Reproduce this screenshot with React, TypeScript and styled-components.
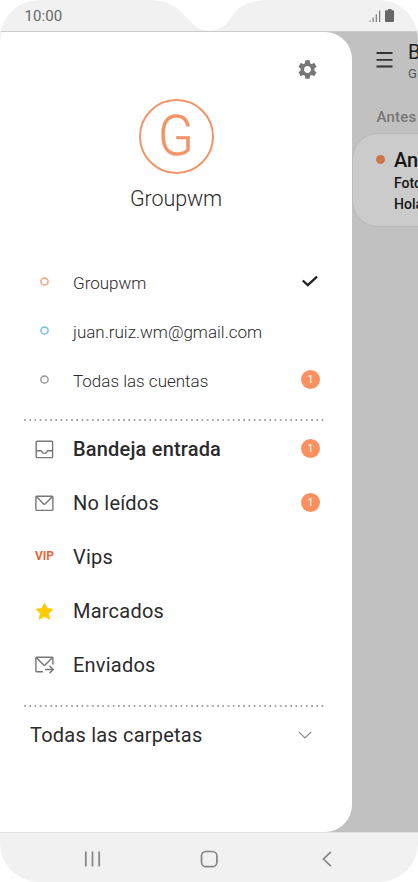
import React from 'react';
import styled, { createGlobalStyle } from 'styled-components';

const GlobalStyle = createGlobalStyle`
  * {
    box-sizing: border-box;
  }

  body {
    margin: 0;
    background: #fff;
    font-family: Roboto, 'Liberation Sans', sans-serif;
    color: #2b2b2b;
  }

  svg {
    display: block;
    flex: none;
  }
`;

const Phone = styled.div`
  display: flex;
  flex-direction: column;
  width: 418px;
  height: 882px;
  border-radius: 39px;
  overflow: hidden;
  background: #fff;
`;

const StatusBar = styled.header`
  position: relative;
  display: flex;
  align-items: center;
  justify-content: space-between;
  height: 32px;
  padding: 0 24px 0 24.5px;
  background: #f1f1f1;
  border-bottom: 1px solid #cbcbcb;
`;

const Notch = styled.svg`
  position: absolute;
  left: 150px;
  top: 0;
`;

const Clock = styled.span`
  font-size: 15px;
  line-height: 20px;
  letter-spacing: 0.1px;
  color: #686868;
  margin-top: 1px;
`;

const StatusIcons = styled.div`
  display: flex;
  align-items: flex-end;
  gap: 4px;
`;

const Screen = styled.div`
  display: flex;
  height: 800px;
  background: #c1c1c1;
`;

const Drawer = styled.nav`
  display: flex;
  flex-direction: column;
  flex: none;
  width: 352px;
  background: #fff;
  border-radius: 0 27px 27px 0;
  padding: 0 28px 0 24px;
`;

const DrawerTop = styled.div`
  display: flex;
  justify-content: flex-end;
  height: 67px;
  padding: 25.5px 5.5px 0 0;
`;

const Profile = styled.div`
  display: flex;
  flex-direction: column;
  align-items: center;
  height: 127px;
  padding-left: 4px;
`;

const Avatar = styled.div`
  display: flex;
  align-items: center;
  justify-content: center;
  width: 75px;
  height: 75px;
  border: 2px solid #f39468;
  border-radius: 50%;
  color: #f39468;
  font-size: 55px;
  font-weight: 300;
  line-height: 75px;
`;

const Letter = styled.span`
  display: block;
  transform: scaleX(0.95);
  -webkit-text-stroke: 0.4px #f39468;
`;

const ProfileName = styled.div`
  margin-top: 10.5px;
  font-size: 21.5px;
  font-weight: 300;
  line-height: 28px;
  letter-spacing: -0.1px;
`;

const Row = styled.div<{ $height: number }>`
  display: flex;
  align-items: center;
  height: ${(props) => props.$height}px;
  padding-right: 4px;
`;

const IconSlot = styled.div`
  display: flex;
  justify-content: center;
  flex: none;
  width: 41px;
  margin-right: 8px;
`;

const DotSvg = styled.svg`
  margin-top: -2px;
`;

const AccountName = styled.span`
  flex: 1;
  font-size: 17px;
  font-weight: 300;
  line-height: 24px;
  white-space: nowrap;
`;

const FolderName = styled.span<{ $strong?: boolean }>`
  flex: 1;
  font-size: 20px;
  font-weight: ${(props) => (props.$strong ? 500 : 400)};
  line-height: 28px;
  letter-spacing: ${(props) => (props.$strong ? 0.18 : 0.22)}px;
`;

const Badge = styled.span`
  width: 19px;
  height: 19px;
  margin-top: -2px;
  border-radius: 50%;
  background: #fc905f;
  color: #fff;
  font-size: 10.5px;
  line-height: 19px;
  text-align: center;
`;

const Divider = styled.div`
  height: 2px;
  width: 301px;
  background: radial-gradient(circle at 1px 1px, #999 0.6px, transparent 1.2px) 0 0 / 5.23px 2px repeat-x;
`;

const Accounts = styled.div`
  height: 161px;
`;

const Folders = styled.div`
  height: 284px;
  padding-top: 1px;
`;

const VipLabel = styled.span`
  color: #e0683b;
  font-size: 12px;
  font-weight: 700;
  line-height: 14px;
  margin-top: -2px;
`;

const MoreFolders = styled(Row)`
  padding: 0 12px 0 6px;
`;

const MailList = styled.main`
  flex: 1;
  min-width: 0;
  overflow: hidden;
  white-space: nowrap;
`;

const MailHeader = styled.div`
  display: flex;
  height: 69px;
  padding: 8px 0 0 24px;
  gap: 15px;
`;

const MailTitle = styled.div`
  font-size: 20px;
  line-height: 24px;
  color: #1e1e1e;
`;

const MailSubtitle = styled.div`
  font-size: 13px;
  line-height: 19px;
  color: #555;
`;

const SectionLabel = styled.div`
  height: 32px;
  padding-left: 24.5px;
  font-size: 15px;
  font-weight: 500;
  line-height: 33px;
  letter-spacing: 0.2px;
  color: #777;
`;

const MailCard = styled.article`
  display: flex;
  width: 360px;
  height: 94px;
  padding: 13px 0 0 23px;
  gap: 9px;
  border: 1px solid #bababa;
  border-radius: 26px;
  background: #cbcbcb;
`;

const UnreadDot = styled.div`
  width: 9px;
  height: 9px;
  margin-top: 8px;
  border-radius: 50%;
  background: #ce744d;
`;

const Sender = styled.div`
  font-size: 20px;
  font-weight: 500;
  line-height: 26px;
  color: #151515;
`;

const MailLine = styled.div`
  font-size: 14px;
  font-weight: 500;
  line-height: 21px;
  color: #151515;
`;

const NavigationBar = styled.footer`
  display: flex;
  align-items: center;
  justify-content: space-between;
  height: 50px;
  padding: 2px 86px 0 84px;
  background: #f1f1f1;
  border-top: 1px solid #e2e2e2;
`;

const InboxIcon = () => (
  <svg width="19" height="19" viewBox="0 0 19 19" fill="none" stroke="#777" strokeWidth="1.4" strokeLinejoin="round">
    <rect x="1.2" y="1.2" width="16.4" height="16.4" rx="0.8" />
    <path d="M1.2 10.7h4.6c.8 0 .8.4 1.1 1.1.4 1 1.2 1.6 2.5 1.6s2.1-.6 2.5-1.6c.3-.7.3-1.1 1.1-1.1h4.6" />
  </svg>
);

const MailIcon = () => (
  <svg width="19" height="17" viewBox="0 0 19 17" fill="none" stroke="#777" strokeWidth="1.4" strokeLinejoin="round">
    <rect x="0.9" y="1.2" width="17" height="14.2" rx="0.8" />
    <path d="M1.5 1.8l7.3 7.3q.6.6 1.2 0l7.3-7.3" />
  </svg>
);

const StarIcon = () => (
  <svg width="19" height="19" viewBox="0 0 19 19" fill="#fc0" stroke="#fc0" strokeWidth="1" strokeLinejoin="round">
    <path d="M9.5 1.2l2.5 5.4 5.9.7-4.4 4 1.2 5.9-5.2-2.9-5.2 2.9 1.2-5.9-4.4-4 5.9-.7z" />
  </svg>
);

const SentIcon = () => (
  <svg width="19" height="18" viewBox="0 0 19 18" fill="none" stroke="#777" strokeWidth="1.4" strokeLinejoin="round">
    <path d="M8 15.7H1.7q-.8 0-.8-.8V2q0-.8.8-.8h15.4q.8 0 .8.8v6.5" />
    <path d="M1.5 1.8l7.3 7.3q.6.6 1.2 0l7.3-7.3" />
    <path d="M10 13.5h8M14.5 9.7l3.8 3.8-3.8 3.8" />
  </svg>
);

const AccountDot = ({ color }: { color: string }) => (
  <DotSvg width="9" height="9" viewBox="0 0 9 9" fill="none" stroke={color} strokeWidth="1.5">
    <circle cx="4.5" cy="4.5" r="3.6" />
  </DotSvg>
);

const CheckSvg = styled.svg`
  margin: -3px 1.5px 0 0;
`;

const CheckIcon = () => (
  <CheckSvg width="18" height="14" viewBox="0 0 18 14" fill="none" stroke="#222" strokeWidth="2.3">
    <path d="M1.8 6.5l5 4.6 9.2-8.5" />
  </CheckSvg>
);

const GearIcon = () => (
  <svg width="23" height="23" viewBox="0 0 24 24" fill="#777">
    <path d="M19.14 12.94c.04-.3.06-.61.06-.94 0-.32-.02-.64-.07-.94l2.03-1.58c.18-.14.23-.41.12-.61l-1.92-3.32c-.12-.22-.37-.29-.59-.22l-2.39.96c-.5-.38-1.03-.7-1.62-.94l-.36-2.54c-.04-.24-.24-.41-.48-.41h-3.84c-.24 0-.43.17-.47.41l-.36 2.54c-.59.24-1.13.57-1.62.94l-2.39-.96c-.22-.08-.47 0-.59.22L2.74 8.87c-.12.21-.08.47.12.61l2.03 1.58c-.05.3-.09.63-.09.94s.02.64.07.94l-2.03 1.58c-.18.14-.23.41-.12.61l1.92 3.32c.12.22.37.29.59.22l2.39-.96c.5.38 1.03.7 1.62.94l.36 2.54c.05.24.24.41.48.41h3.84c.24 0 .44-.17.47-.41l.36-2.54c.59-.24 1.13-.56 1.62-.94l2.39.96c.22.08.47 0 .59-.22l1.92-3.32c.12-.22.07-.47-.12-.61l-2.01-1.58zM12 15.6c-1.98 0-3.6-1.62-3.6-3.6s1.62-3.6 3.6-3.6 3.6 1.62 3.6 3.6-1.62 3.6-3.6 3.6z" />
  </svg>
);

const accounts = [
  { name: 'Groupwm', color: '#f0a17c', active: true },
  { name: 'juan.ruiz.wm@gmail.com', color: '#6cc3df' },
  { name: 'Todas las cuentas', color: '#999', unread: 1 },
];

const folders = [
  { name: 'Bandeja entrada', icon: <InboxIcon />, unread: 1, strong: true },
  { name: 'No leídos', icon: <MailIcon />, unread: 1 },
  { name: 'Vips', icon: <VipLabel>VIP</VipLabel> },
  { name: 'Marcados', icon: <StarIcon /> },
  { name: 'Enviados', icon: <SentIcon /> },
];

const App: React.FC = () => {
  return (
    <Phone>
      <GlobalStyle />
      <StatusBar>
        <Clock>10:00</Clock>
        <Notch width="118" height="31" viewBox="0 0 118 31">
          <path d="M0 0C22 1 29 9 39 20C45 27 51 30.5 59 30.5C68 30.5 75 27 80 19C87 8 94 1 118 0Z" fill="#fff" />
        </Notch>
        <StatusIcons>
          <svg width="12" height="12" viewBox="0 0 12 12" fill="#777">
            <path d="M.5 10.5h1V12h-1zM3.5 7.5h1.2V12H3.5zM6.7 4.2h1.2V12H6.7zM10 .5h1.2V12H10z" />
          </svg>
          <svg width="9" height="13" viewBox="0 0 9 13" fill="#666">
            <path d="M3 0h3.5v1.3H8q1 0 1 1V12q0 1-1 1H1q-1 0-1-1V2.3q0-1 1-1h2z" />
          </svg>
        </StatusIcons>
      </StatusBar>
      <Screen>
        <Drawer>
          <DrawerTop>
            <GearIcon />
          </DrawerTop>
          <Profile>
            <Avatar>
              <Letter>G</Letter>
            </Avatar>
            <ProfileName>Groupwm</ProfileName>
          </Profile>
          <Row $height={32} />
          <Accounts>
            {accounts.map((account) => (
              <Row key={account.name} $height={49}>
                <IconSlot>
                  <AccountDot color={account.color} />
                </IconSlot>
                <AccountName>{account.name}</AccountName>
                {account.active && <CheckIcon />}
                {account.unread && <Badge>{account.unread}</Badge>}
              </Row>
            ))}
          </Accounts>
          <Divider />
          <Folders>
            {folders.map((folder) => (
              <Row key={folder.name} $height={54}>
                <IconSlot>{folder.icon}</IconSlot>
                <FolderName $strong={folder.strong}>{folder.name}</FolderName>
                {folder.unread && <Badge>{folder.unread}</Badge>}
              </Row>
            ))}
          </Folders>
          <Divider />
          <MoreFolders $height={56}>
            <FolderName>Todas las carpetas</FolderName>
            <svg width="14" height="8" viewBox="0 0 14 8" fill="none" stroke="#888" strokeWidth="1.2">
              <path d="M.8.8L7 7 13.2.8" />
            </svg>
          </MoreFolders>
        </Drawer>
        <MailList>
          <MailHeader>
            <svg width="17" height="38" viewBox="0 0 17 38" stroke="#333" strokeWidth="1.8">
              <path d="M.5 13h16M.5 19.8h16M.5 26.5h16" />
            </svg>
            <div>
              <MailTitle>B</MailTitle>
              <MailSubtitle>G</MailSubtitle>
            </div>
          </MailHeader>
          <SectionLabel>Antes</SectionLabel>
          <MailCard>
            <UnreadDot />
            <div>
              <Sender>An</Sender>
              <MailLine>Foto</MailLine>
              <MailLine>Hola</MailLine>
            </div>
          </MailCard>
        </MailList>
      </Screen>
      <NavigationBar>
        <svg width="17" height="16" viewBox="0 0 17 16" stroke="#858585" strokeWidth="1.7">
          <path d="M1.8.5v15M8.5.5v15M15.2.5v15" />
        </svg>
        <svg width="24" height="18" viewBox="0 0 24 18" fill="none" stroke="#858585" strokeWidth="1.7">
          <rect x="1.5" y="1.5" width="15.4" height="15.2" rx="4.5" />
        </svg>
        <svg width="10" height="16" viewBox="0 0 10 16" fill="none" stroke="#858585" strokeWidth="1.7">
          <path d="M8.9.9L1.5 8l7.4 7.1" />
        </svg>
      </NavigationBar>
    </Phone>
  );
};

export default App;
